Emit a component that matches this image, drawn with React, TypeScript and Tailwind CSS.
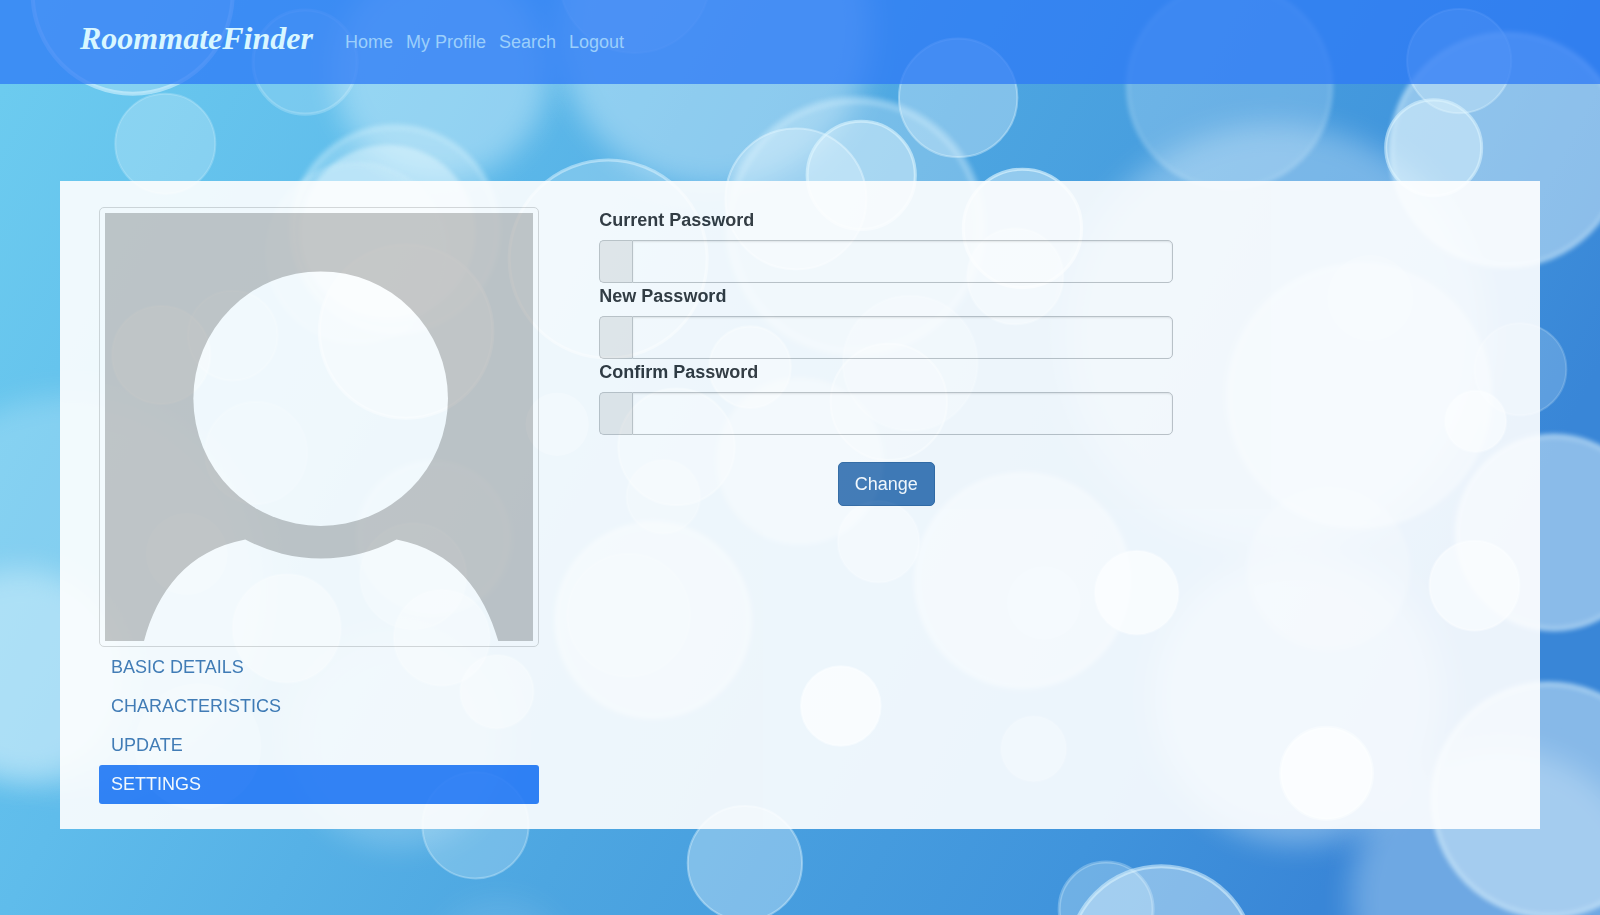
import React from "react";

type Bubble = {
  x: number;
  y: number;
  r: number;
  fill: number;
  ring?: number;
  width?: number;
  blur?: "soft" | "haze";
};

const bubbles: Bubble[] = [
  { x: 432, y: 70, r: 106, fill: 0.38, blur: "haze" },
  { x: 700, y: 30, r: 154, fill: 0.38, blur: "haze" },
  { x: 70, y: 580, r: 192, fill: 0.24, blur: "haze" },
  { x: 20, y: 662, r: 104, fill: 0.4, blur: "haze" },
  { x: 390, y: 725, r: 106, fill: 0.22, blur: "haze" },
  { x: 490, y: 950, r: 70, fill: 0.1, blur: "haze" },
  { x: 1250, y: 330, r: 208, fill: 0.32, blur: "haze" },
  { x: 1272, y: 685, r: 142, fill: 0.36, blur: "haze" },
  { x: 1470, y: 880, r: 146, fill: 0.3, blur: "haze" },
  { x: 130, y: -6, r: 98, fill: 0.22, ring: 0.55, width: 4 },
  { x: 299, y: 61, r: 51, fill: 0.16, ring: 0.25, width: 3 },
  { x: 162, y: 141, r: 49, fill: 0.26, ring: 0.25, width: 2 },
  { x: 622, y: -22, r: 74, fill: 0.2, ring: 0.2, width: 2 },
  { x: 939, y: 96, r: 58, fill: 0.34, ring: 0.4, width: 2 },
  { x: 1205, y: 85, r: 100, fill: 0.22, ring: 0.2, width: 4, blur: "soft" },
  { x: 1477, y: 147, r: 114, fill: 0.46, ring: 0.4, width: 5, blur: "soft" },
  { x: 1430, y: 60, r: 51, fill: 0.28, ring: 0.35, width: 2 },
  { x: 1405, y: 145, r: 47, fill: 0.44, ring: 0.55, width: 3 },
  { x: 838, y: 222, r: 124, fill: 0.26, ring: 0.3, width: 8, blur: "soft" },
  { x: 780, y: 195, r: 69, fill: 0.3, ring: 0.5, width: 2 },
  { x: 844, y: 172, r: 53, fill: 0.42, ring: 0.6, width: 3 },
  { x: 1002, y: 224, r: 58, fill: 0.45, ring: 0.65, width: 3 },
  { x: 995, y: 271, r: 47, fill: 0.4, ring: 0.3, width: 2 },
  { x: 596, y: 254, r: 97, fill: 0.24, ring: 0.5, width: 3 },
  { x: 387, y: 225, r: 101, fill: 0.26, ring: 0.26, width: 6, blur: "soft" },
  { x: 380, y: 228, r: 86, fill: 0.44, blur: "soft" },
  { x: 350, y: 248, r: 88, fill: 0.16, ring: 0.2, width: 3, blur: "soft" },
  { x: 398, y: 325, r: 85, fill: 0.4, ring: 0.5, width: 3 },
  { x: 158, y: 348, r: 48, fill: 0.3, ring: 0.25, width: 2 },
  { x: 228, y: 329, r: 44, fill: 0.16, ring: 0.2, width: 2 },
  { x: 251, y: 444, r: 50, fill: 0.16, ring: 0.16, width: 2 },
  { x: 425, y: 527, r: 74, fill: 0.2, ring: 0.2, width: 4, blur: "soft" },
  { x: 405, y: 565, r: 52, fill: 0.24, ring: 0.16, width: 2 },
  { x: 183, y: 543, r: 40, fill: 0.2 },
  { x: 281, y: 616, r: 53, fill: 0.4, ring: 0.2, width: 2 },
  { x: 433, y: 625, r: 47, fill: 0.35, ring: 0.2, width: 2 },
  { x: 487, y: 678, r: 36, fill: 0.4, ring: 0.2, width: 2 },
  { x: 194, y: 732, r: 62, fill: 0.2 },
  { x: 640, y: 608, r: 95, fill: 0.42, ring: 0.35, width: 5, blur: "soft" },
  { x: 616, y: 603, r: 60, fill: 0.14, ring: 0.2, width: 2 },
  { x: 663, y: 438, r: 57, fill: 0.3, ring: 0.35, width: 2 },
  { x: 735, y: 360, r: 40, fill: 0.4, ring: 0.35, width: 2 },
  { x: 650, y: 487, r: 36, fill: 0.26, ring: 0.2, width: 2 },
  { x: 546, y: 416, r: 31, fill: 0.3 },
  { x: 892, y: 356, r: 66, fill: 0.26, ring: 0.2, width: 2 },
  { x: 871, y: 394, r: 57, fill: 0.24, ring: 0.45, width: 2 },
  { x: 784, y: 452, r: 82, fill: 0.36, blur: "soft" },
  { x: 861, y: 531, r: 40, fill: 0.36, ring: 0.2, width: 2 },
  { x: 1002, y: 569, r: 105, fill: 0.42, ring: 0.3, width: 4, blur: "soft" },
  { x: 1023, y: 591, r: 36, fill: 0.12 },
  { x: 1114, y: 581, r: 41, fill: 0.68, ring: 0.3, width: 2 },
  { x: 824, y: 692, r: 39, fill: 0.72, ring: 0.5, width: 2 },
  { x: 1013, y: 734, r: 32, fill: 0.28, ring: 0.1, width: 2 },
  { x: 1300, y: 758, r: 45, fill: 0.8, ring: 0.5, width: 3 },
  { x: 1302, y: 558, r: 80, fill: 0.22, blur: "soft" },
  { x: 1332, y: 388, r: 129, fill: 0.36, ring: 0.25, width: 4, blur: "soft" },
  { x: 1343, y: 292, r: 42, fill: 0.2 },
  { x: 1490, y: 362, r: 45, fill: 0.2, ring: 0.2, width: 2 },
  { x: 1446, y: 413, r: 30, fill: 0.55, ring: 0.3, width: 2 },
  { x: 1523, y: 522, r: 95, fill: 0.46, ring: 0.42, width: 5, blur: "soft" },
  { x: 1445, y: 574, r: 44, fill: 0.55, ring: 0.4, width: 2 },
  { x: 1518, y: 784, r: 114, fill: 0.44, ring: 0.45, width: 5, blur: "soft" },
  { x: 1084, y: 891, r: 46, fill: 0.28, ring: 0.3, width: 3 },
  { x: 1138, y: 940, r: 91, fill: 0.42, ring: 0.55, width: 4 },
  { x: 730, y: 846, r: 56, fill: 0.34, ring: 0.42, width: 2 },
  { x: 466, y: 809, r: 52, fill: 0.24, ring: 0.32, width: 2 },
];

function Backdrop() {
  return (
    <svg
      aria-hidden="true"
      className="absolute inset-0 -z-10 h-full w-full"
      viewBox="0 0 1568 897"
      preserveAspectRatio="xMidYMid slice"
    >
      <defs>
        <linearGradient id="sky" x1="0" y1="0.1" x2="1" y2="0.4">
          <stop offset="0" stopColor="#6ccbef" />
          <stop offset="0.25" stopColor="#5fbceb" />
          <stop offset="0.55" stopColor="#4da6e1" />
          <stop offset="0.85" stopColor="#4094dc" />
          <stop offset="1" stopColor="#3986d7" />
        </linearGradient>
        <filter id="soft" x="-20%" y="-20%" width="140%" height="140%" colorInterpolationFilters="sRGB">
          <feGaussianBlur stdDeviation="2" />
        </filter>
        <filter id="haze" x="-30%" y="-30%" width="160%" height="160%" colorInterpolationFilters="sRGB">
          <feGaussianBlur stdDeviation="14" />
        </filter>
      </defs>
      <rect width="1568" height="897" fill="url(#sky)" />
      {bubbles.map((b, i) => (
        <circle
          key={i}
          cx={b.x}
          cy={b.y}
          r={b.r}
          fill="#ebfaff"
          fillOpacity={b.fill}
          stroke="#dff6ff"
          strokeOpacity={b.ring ?? 0}
          strokeWidth={b.width ?? 0}
          filter={b.blur ? `url(#${b.blur})` : undefined}
        />
      ))}
    </svg>
  );
}

function Avatar() {
  return (
    <svg viewBox="0 0 429 429" role="img" aria-label="Profile picture" className="block w-full">
      <rect width="429" height="429" fill="#c5c4c3" />
      <circle cx="216" cy="186" r="127.5" fill="#fff" />
      <path
        d="M39 429C52 380 82 338 140.500 327A160 160 0 0 0 292 327C350 338 380 380 394 429Z"
        fill="#fff"
      />
    </svg>
  );
}

const navLinks = ["Home", "My Profile", "Search", "Logout"];
const tabs = ["BASIC DETAILS", "CHARACTERISTICS", "UPDATE", "SETTINGS"];
const fields = [
  { id: "current", label: "Current Password" },
  { id: "new", label: "New Password" },
  { id: "confirm", label: "Confirm Password" },
];

export default function App() {
  return (
    <div className="relative isolate min-h-screen overflow-hidden font-['Helvetica_Neue',Helvetica,'Liberation_Sans',Arial,sans-serif] text-[18px] leading-[27px]">
      <Backdrop />
      <header className="flex h-[84px] items-start bg-[#2e7af5]/75 pl-20">
        <a
          href="#"
          className="mt-4 font-['Apple_Chancery','Liberation_Serif',serif] text-[32px] leading-[44px] font-bold text-[#d9f7ff] italic"
        >
          RoommateFinder
        </a>
        <nav className="mt-[29px] ml-8 flex gap-[13px]">
          {navLinks.map((label) => (
            <a key={label} href="#" className="text-[#9ccffb]">
              {label}
            </a>
          ))}
        </nav>
      </header>

      <main className="mx-[60px] mt-[97px] grid grid-cols-3 bg-white pt-[26px] pr-5 pb-[25px] pl-[19px] opacity-90">
        <aside className="px-5">
          <div className="rounded-[5px] border border-[#d6d6d6] p-[5px]">
            <Avatar />
          </div>
          <ul className="pt-px">
            {tabs.map((label) => (
              <li key={label}>
                <a
                  href="#"
                  className={
                    label === "SETTINGS"
                      ? "block rounded-[3px] bg-[#2b7cf6] px-3 py-[6px] text-white"
                      : "block rounded-[3px] px-3 py-[6px] text-[#3a74b0]"
                  }
                >
                  {label}
                </a>
              </li>
            ))}
          </ul>
        </aside>

        <section className="col-span-2 px-5">
          <form className="w-2/3 px-5" onSubmit={(e) => e.preventDefault()}>
            {fields.map((f) => (
              <div key={f.id}>
                <label htmlFor={f.id} className="mb-[6px] block font-bold text-[#2b2f33]">
                  {f.label}
                </label>
                <div className="flex h-[43px]">
                  <span className="w-[33px] rounded-l-[5px] border border-r-0 border-[#bfc2c4] bg-[#e9e9e9]" />
                  <input
                    id={f.id}
                    type="password"
                    className="min-w-0 flex-1 rounded-r-[5px] border border-[#bfc2c4] bg-white px-4 shadow-[inset_0_1px_2px_rgba(0,0,0,0.1)] outline-none"
                  />
                </div>
              </div>
            ))}
            <div className="mt-[27px] flex justify-center">
              <button
                type="submit"
                className="h-11 rounded-[5px] border border-[#2e659f] bg-[#3d75b2] px-4 text-white"
              >
                Change
              </button>
            </div>
          </form>
        </section>
      </main>
    </div>
  );
}
